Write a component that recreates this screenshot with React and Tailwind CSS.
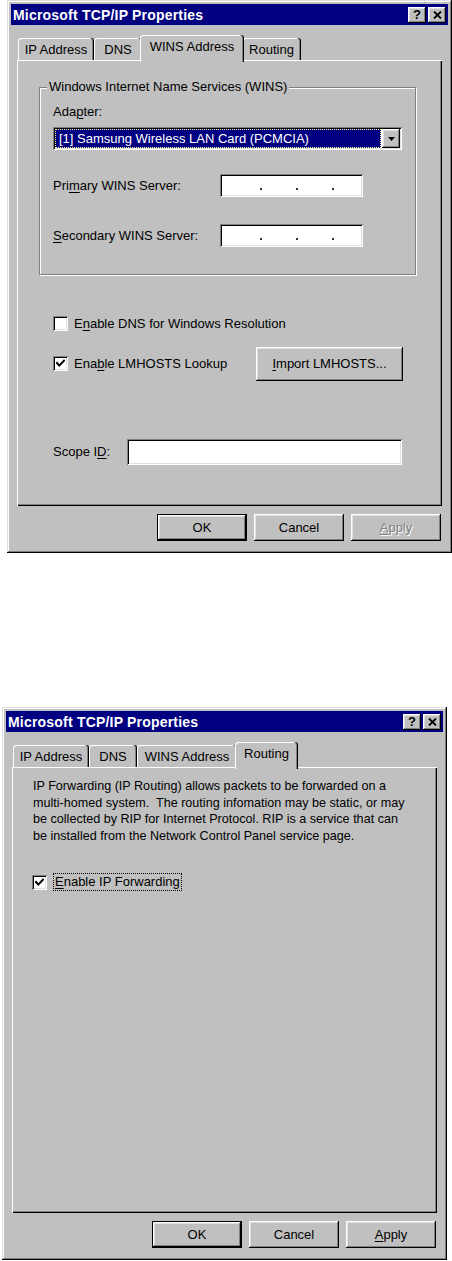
import React from "react";

const raised =
  "bg-[#c0c0c0] shadow-[inset_-1px_-1px_#000,inset_1px_1px_#fff,inset_-2px_-2px_#808080,inset_2px_2px_#dfdfdf]";
const sunken =
  "bg-white shadow-[inset_1px_1px_#808080,inset_-1px_-1px_#fff,inset_2px_2px_#000,inset_-2px_-2px_#dfdfdf]";

function U({ children }) {
  return <span className="underline underline-offset-[2px] decoration-1">{children}</span>;
}

function TitleBar() {
  return (
    <div className="h-[21px] bg-[#000080] flex items-center justify-between pl-[2px] pr-[2px]">
      <span className="text-white font-bold text-[14px] leading-none tracking-[0.2px]">
        Microsoft TCP/IP Properties
      </span>
      <div className="flex gap-[2px]">
        <div className={`${raised} w-[18px] h-[16px] flex items-center justify-center text-black font-bold text-[13px] leading-none`}>
          ?
        </div>
        <div className={`${raised} w-[18px] h-[16px] flex items-center justify-center`}>
          <svg width="9" height="8" viewBox="0 0 9 8">
            <path d="M1 0.5 L8 7.5 M8 0.5 L1 7.5" stroke="#000" strokeWidth="1.8" />
          </svg>
        </div>
      </div>
    </div>
  );
}

const tabDefs = [
  { label: "IP Address", w: "w-[76px]", ws: "w-[80px]" },
  { label: "DNS", w: "w-[48px]", ws: "w-[52px]" },
  { label: "WINS Address", w: "w-[100px]", ws: "w-[104px]" },
  { label: "Routing", w: "w-[59px]", ws: "w-[63px]" },
];

function Tabs({ active }) {
  return (
    <div className="flex items-end h-[25px] pl-[1px]">
      {tabDefs.map((t) =>
        t.label === active ? (
          <div
            key={t.label}
            className={`${t.ws} relative z-10 -mx-[2px] -mb-[2px] h-[27px] bg-[#c0c0c0] rounded-t-[3px] shadow-[inset_-1px_0_#000,inset_-2px_0_#808080,inset_1px_1px_#fff] flex justify-center pt-[5px] text-[13px] leading-[14px]`}
          >
            {t.label}
          </div>
        ) : (
          <div
            key={t.label}
            className={`${t.w} h-[22px] bg-[#c0c0c0] rounded-t-[3px] shadow-[inset_-1px_0_#000,inset_-2px_0_#808080,inset_1px_1px_#fff] flex justify-center pt-[5px] text-[13px] leading-[14px]`}
          >
            {t.label}
          </div>
        )
      )}
    </div>
  );
}

function Check({ checked }) {
  return (
    <div className={`${sunken} w-[15px] h-[15px] shrink-0 flex items-center justify-center`}>
      {checked && (
        <svg width="9" height="9" viewBox="0 0 9 9">
          <path d="M1 4 L3.3 6.6 L8 1.6" stroke="#000" strokeWidth="2" fill="none" strokeLinecap="square" />
        </svg>
      )}
    </div>
  );
}

function Button({ children, isDefault, disabled }) {
  return (
    <div
      className={`w-[90px] h-[27px] flex items-center justify-center text-[13px] ${
        isDefault ? "border border-black" : ""
      } ${raised} ${disabled ? "text-[#808080] [text-shadow:1px_1px_0_#fff]" : "text-black"}`}
    >
      {children}
    </div>
  );
}

function IpField() {
  return (
    <div className={`${sunken} w-[143px] h-[23px] flex items-end pb-[7px] pl-[40px] gap-[34px]`}>
      <span className="w-[2px] h-[2px] bg-[#303030]" />
      <span className="w-[2px] h-[2px] bg-[#303030]" />
      <span className="w-[2px] h-[2px] bg-[#303030]" />
    </div>
  );
}

function Dialog({ active, className, children, applyDisabled }) {
  return (
    <div
      className={`${className} w-[445px] h-[553px] bg-[#c0c0c0] p-[4px] shadow-[inset_-1px_-1px_#000,inset_1px_1px_#dfdfdf,inset_-2px_-2px_#808080,inset_2px_2px_#fff] flex flex-col`}
    >
      <TitleBar />
      <div className="px-[6px] pt-[10px] flex flex-col">
        <Tabs active={active} />
        <div className="h-[446px] bg-[#c0c0c0] shadow-[inset_1px_1px_#fff,inset_-1px_-1px_#000,inset_-2px_-2px_#808080] flex flex-col">
          {children}
        </div>
        <div className="flex justify-end gap-[7px] mt-[8px] pr-[1px]">
          <Button isDefault>OK</Button>
          <Button>Cancel</Button>
          <Button disabled={applyDisabled}>
            <U>A</U>pply
          </Button>
        </div>
      </div>
    </div>
  );
}

export default function App() {
  return (
    <div className="w-[452px] min-h-[1261px] bg-white text-black font-['Liberation_Sans',Arial,sans-serif] text-[13px]">
      <Dialog active="WINS Address" className="ml-[7px]" applyDisabled>
        <fieldset className="ml-[22px] mt-[20px] w-[376px] border border-[#808080] shadow-[1px_1px_0_#fff,inset_1px_1px_0_#fff] px-[13px] pb-[27px]">
          <legend className="-ml-[6px] px-[2px] bg-[#c0c0c0] leading-[14px]">
            Windows Internet Name Services (WINS)
          </legend>
          <div className="mt-[11px] leading-[14px]">
            Ada<U>p</U>ter:
          </div>
          <div className={`${sunken} mt-[8px] w-[349px] h-[23px] p-[2px] flex gap-[1px]`}>
            <div className="flex-1 bg-[#000080] text-white border border-dotted border-[#ffff99] flex items-center pl-[3px] leading-none">
              [1] Samsung Wireless LAN Card (PCMCIA)
            </div>
            <div className={`${raised} w-[18px] flex items-center justify-center`}>
              <svg width="7" height="4" viewBox="0 0 7 4">
                <path d="M0 0 H7 L3.5 4 Z" fill="#000" />
              </svg>
            </div>
          </div>
          <div className="mt-[24px] flex items-center">
            <div className="w-[167px]">
              Pri<U>m</U>ary WINS Server:
            </div>
            <IpField />
          </div>
          <div className="mt-[27px] flex items-center">
            <div className="w-[167px]">
              <U>S</U>econdary WINS Server:
            </div>
            <IpField />
          </div>
        </fieldset>

        <div className="ml-[36px] mt-[39px] flex items-center gap-[6px]">
          <Check />
          <span>
            E<U>n</U>able DNS for Windows Resolution
          </span>
        </div>
        <div className="ml-[36px] mt-[13px] flex items-center">
          <div className="w-[203px] flex items-center gap-[6px]">
            <Check checked />
            <span>
              Ena<U>b</U>le LMHOSTS Lookup
            </span>
          </div>
          <div className={`${raised} w-[147px] h-[34px] flex items-center justify-center`}>
            <span>
              <U>I</U>mport LMHOSTS...
            </span>
          </div>
        </div>

        <div className="ml-[36px] mt-[58px] flex items-center">
          <div className="w-[74px]">
            Scope I<U>D</U>:
          </div>
          <div className={`${sunken} w-[275px] h-[26px]`} />
        </div>
      </Dialog>

      <Dialog active="Routing" className="ml-[2px] mt-[154px]">
        <p className="ml-[21px] mt-[11px] text-[12.6px] leading-[16.5px] whitespace-pre">
          IP Forwarding (IP Routing) allows packets to be forwarded on a
          <br />
          multi-homed system.  The routing infomation may be static, or may
          <br />
          be collected by RIP for Internet Protocol. RIP is a service that can
          <br />
          be installed from the Network Control Panel service page.
        </p>
        <div className="ml-[20px] mt-[29px] flex items-center gap-[6px]">
          <Check checked />
          <span className="border border-dotted border-black px-[1px] leading-[16px]">
            <U>E</U>nable IP Forwarding
          </span>
        </div>
      </Dialog>
    </div>
  );
}
